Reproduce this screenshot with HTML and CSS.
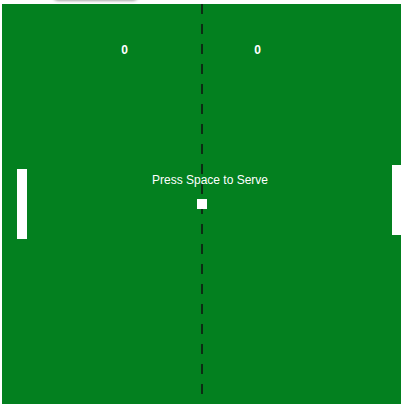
FILE: index.html
```html
<!DOCTYPE html>
<html>
<head>
<meta charset="utf-8">
<link rel="stylesheet" href="styles.css">
</head>
<body>
<div class="topbtn"></div>
<main class="stage">
  <svg class="court" width="400" height="400" viewBox="0 0 400 400">
    <rect class="field" x="0" y="0" width="400" height="400"/>
    <line class="net" x1="200" y1="0" x2="200" y2="400"/>
    <text class="score" x="122.5" y="50">0</text>
    <text class="score" x="255.5" y="50">0</text>
    <text class="msg" x="208" y="180">Press Space to Serve</text>
    <rect class="piece" x="15" y="165" width="10" height="70"/>
    <rect class="piece" x="390" y="161" width="10" height="70"/>
    <rect class="piece" x="195" y="195" width="10" height="10"/>
  </svg>
</main>
</body>
</html>
```
FILE: styles.css
```css
html, body {
  margin: 0;
  padding: 0;
  background: #ffffff;
  overflow: hidden;
}
body {
  position: relative;
  width: 401px;
  height: 404px;
}
.topbtn {
  position: absolute;
  left: 53px;
  top: -20px;
  width: 85px;
  height: 20px;
  border-radius: 5px;
  background: #f4f4f4;
  box-shadow: 0 1px 3px rgba(0, 0, 0, 0.35);
}
.stage {
  padding: 4px 0 0 2px;
  display: flex;
}
.court {
  display: block;
  flex: none;
}
.field {
  fill: #03801f;
}
.net {
  stroke: #111111;
  stroke-width: 1.5;
  stroke-dasharray: 10 10;
}
.score {
  fill: #ffffff;
  font-family: "Liberation Sans", Arial, sans-serif;
  font-weight: bold;
  font-size: 12px;
  text-anchor: middle;
}
.msg {
  fill: #ffffff;
  font-family: "Liberation Sans", Arial, sans-serif;
  font-size: 12px;
  text-anchor: middle;
}
.piece {
  fill: #ffffff;
}
```
